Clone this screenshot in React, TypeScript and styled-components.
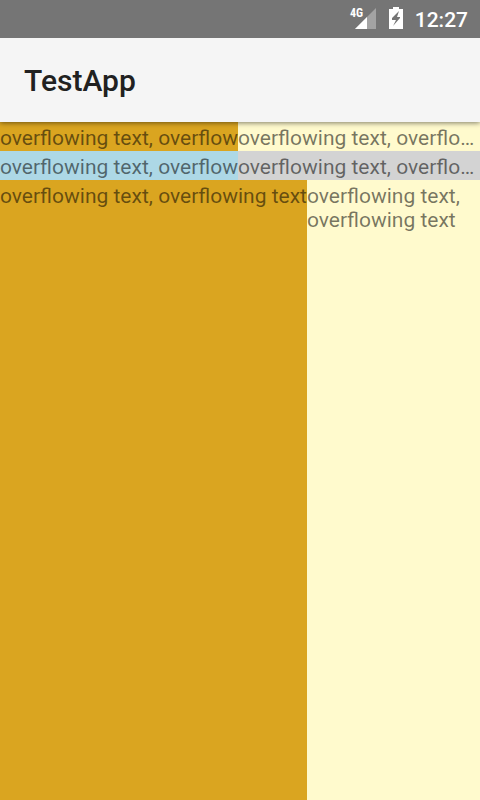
import React from "react";
import styled, { createGlobalStyle } from "styled-components";

const GlobalStyle = createGlobalStyle`
  body {
    margin: 0;
    font-family: Roboto, "Noto Sans", sans-serif;
  }
`;

const Screen = styled.div`
  display: flex;
  flex-direction: column;
  min-height: 100vh;
  background: #fffacd;
`;

const StatusBar = styled.div`
  display: flex;
  align-items: center;
  justify-content: flex-end;
  height: 38px;
  padding-right: 12px;
  background: #757575;
  color: #fff;
  z-index: 2;
`;

const SignalIcon = styled.svg`
  width: 28px;
  height: 24px;
  margin-right: 12px;
`;

const NetworkLabel = styled.text`
  fill: #fff;
  font-family: "Roboto Condensed", "Liberation Sans Narrow", Roboto, sans-serif;
  font-size: 12px;
  font-weight: 700;
`;

const BatteryIcon = styled.svg`
  width: 14px;
  height: 24px;
  margin-right: 12px;
`;

const Clock = styled.time`
  font-size: 21px;
  line-height: 24px;
  font-weight: 500;
  padding-top: 2px;
`;

const AppBar = styled.header`
  display: flex;
  align-items: center;
  height: 84px;
  padding: 0 24px;
  background: #f5f5f5;
  box-shadow: 0 1px 5px rgba(0, 0, 0, 0.5);
  z-index: 1;
`;

const Title = styled.h1`
  margin: 0;
  padding-top: 2px;
  font-size: 30px;
  line-height: 36px;
  font-weight: 500;
  color: #212121;
`;

const Content = styled.main`
  display: flex;
  flex: 1;
  flex-direction: column;
`;

const Row = styled.div`
  display: grid;
  grid-template-columns: minmax(0, 119fr) minmax(0, 121fr);
`;

const FillRow = styled.div`
  display: grid;
  grid-template-columns: max-content minmax(0, 1fr);
  flex: 1;
`;

const Cell = styled.div<{ $color: string; $overflow?: "clip" | "ellipsis" }>`
  padding: 4px 0 1px;
  overflow: hidden;
  background: ${({ $color }) => $color};
  color: rgba(0, 0, 0, 0.54);
  font-size: 21px;
  line-height: 24px;
  white-space: ${({ $overflow }) => ($overflow ? "nowrap" : "normal")};
  text-overflow: ${({ $overflow }) => $overflow ?? "clip"};
`;

const label = "overflowing text, overflowing text";

export default function App() {
  return (
    <Screen>
      <GlobalStyle />
      <StatusBar>
        <SignalIcon viewBox="0 0 28 24" role="img" aria-label="4G signal">
          <path d="M27 1V22H6Z" fill="#a3a3a3" />
          <path d="M18 10V22H6Z" fill="#fff" />
          <NetworkLabel x="1" y="10">4G</NetworkLabel>
        </SignalIcon>
        <BatteryIcon viewBox="0 0 14 24" role="img" aria-label="Battery charging">
          <path d="M4 0H10V2H14V22H0V2H4Z" fill="#fff" />
          <path d="M10 4L3 11V13H7L4 19L11 11V10H8Z" fill="#757575" />
        </BatteryIcon>
        <Clock>12:27</Clock>
      </StatusBar>
      <AppBar>
        <Title>TestApp</Title>
      </AppBar>
      <Content>
        <Row>
          <Cell $color="#daa520" $overflow="clip">{label}</Cell>
          <Cell $color="#fffacd" $overflow="ellipsis">{label}</Cell>
        </Row>
        <Row>
          <Cell $color="#add8e6" $overflow="clip">{label}</Cell>
          <Cell $color="#d3d3d3" $overflow="ellipsis">{label}</Cell>
        </Row>
        <FillRow>
          <Cell $color="#daa520">{label}</Cell>
          <Cell $color="#fffacd">{label}</Cell>
        </FillRow>
      </Content>
    </Screen>
  );
}
